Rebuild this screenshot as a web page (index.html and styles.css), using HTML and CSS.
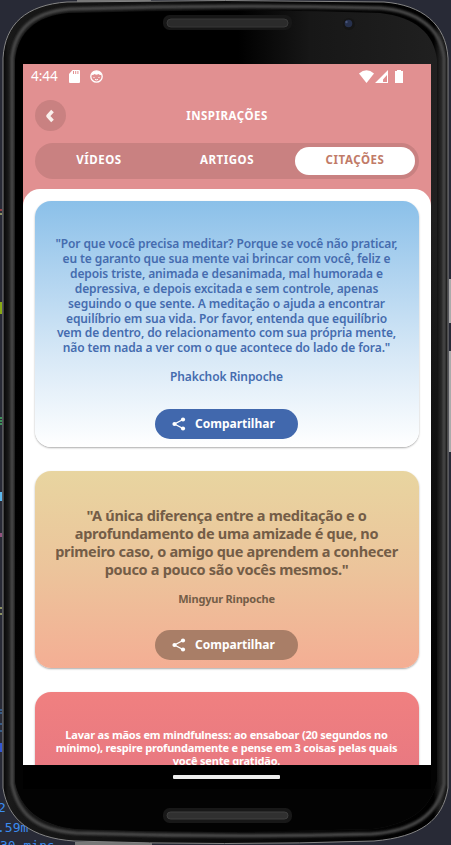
FILE: index.html
```html
<!DOCTYPE html>
<html lang="pt-BR">
<head>
<meta charset="utf-8">
<title>Inspirações</title>
<link rel="stylesheet" href="styles.css">
</head>
<body>
<svg class="device" viewBox="0 0 451 845" aria-hidden="true">
  <defs>
    <linearGradient id="glass" x1="0" x2="1"><stop offset="0" stop-color="#000"/><stop offset=".53" stop-color="#000"/><stop offset=".7" stop-color="#171717"/><stop offset="1" stop-color="#202020"/></linearGradient>
    <linearGradient id="fade" x1="0" x2="0" y1="0" y2="1"><stop offset=".2" stop-color="#000" stop-opacity="0"/><stop offset=".8" stop-color="#030303"/></linearGradient>
    <linearGradient id="rim" x1="0" x2="1"><stop offset="0" stop-color="#050505"/><stop offset=".012" stop-color="#191919"/><stop offset=".03" stop-color="#171717"/><stop offset=".968" stop-color="#000"/><stop offset=".982" stop-color="#222"/><stop offset="1" stop-color="#111"/></linearGradient>
    <filter id="soft" x="-5%" y="-5%" width="110%" height="110%"><feGaussianBlur stdDeviation="1"/></filter>
  </defs>
  <path d="M77 0H151V4H77zM75 842H152V845H75z" fill="#777"/>
  <path d="M449 279h2v44h-2zM449 351h2v101h-2z" fill="#aaa"/>
  <path d="M3 58C5 24 26 5 67 2Q225-1 384 2C422 5 446 24 448 58V788C443 820 421 837 374 841Q225 846 74 841C31 838 8 820 3 788Z" fill="url(#rim)" stroke="#858585" stroke-width="1"/>
  <path d="M12 58C15 28 34 12 70 9Q225 4 380 8C417 11 441 28 444 58V784C438 814 414 831 372 834Q225 838 76 833C36 830 18 814 12 784Z" fill="none" stroke="#484848" stroke-width="3.500" filter="url(#soft)"/>
  <path d="M15 60C18 32 36 16 68 13Q225 8 380 13C415 17 434 33 437 60V781C431 809 410 824 373 829Q225 834 77 829C39 825 20 808 15 781Z" fill="url(#glass)"/>
  <path d="M15 60V781C20 808 39 825 77 829Q225 834 373 829C410 824 431 809 437 781V60Z" fill="url(#fade)"/>
  <rect x="163" y="15" width="129" height="15" rx="6.5" fill="#171717"/><rect x="167" y="19" width="121" height="8" rx="4" fill="#2b2b2b" stroke="#393939"/>
  <circle cx="349" cy="24" r="6" fill="#151515"/><circle cx="348.500" cy="23.500" r="3.800" fill="#26304c"/><circle cx="346.500" cy="22" r="1.200" fill="#47547b"/>
  <rect x="163" y="808" width="129" height="15" rx="6.500" fill="#181818"/><rect x="167" y="812" width="121" height="7" rx="3.500" fill="#303030" stroke="#404040"/>
  <rect x="23" y="765" width="408" height="24" fill="#000"/>
  <path d="M0 210h2" stroke="#ff5555"/><path d="M0 418h2M0 421h2M0 424h2" stroke="#50fa7b"/><path d="M0 214h2M0 608h2M0 614h2" stroke="#f1fa8c"/>
  <path d="M0 302h2v12H0z" fill="#8aaa13"/><path d="M0 492h2v9H0z" fill="#5bb9ef"/><path d="M0 534h2M0 536h2" stroke="#ff79c6"/>
  <path d="M0 710h2M0 713h2M0 724h2M0 731h2" stroke="#458bd7"/><path d="M0 743h2v9H0z" fill="#3156d4"/>
</svg>
<div class="code code-a">2</div>
<div class="code code-b">.59m</div>
<div class="code code-c">30 mins</div>

<main class="screen">
  <header class="header">
    <div class="status">
      <span class="clock">4:44</span>
      <svg class="sd" viewBox="0 0 11 13"><path d="M3.500 0H10q1 0 1 1v11q0 1-1 1H1q-1 0-1-1V4z" fill="#fff"/><path d="M4.500 1v3M6.700 1v3M8.900 1v3" stroke="#e19091"/></svg>
      <svg class="face" viewBox="0 0 13 13"><circle cx="6.500" cy="6.500" r="5.700" fill="none" stroke="#fff" stroke-width="1.300"/><path d="M2 4Q2 1 6.500 1T11 4V5Q9 5 8.500 4 6.500 5.500 4.500 4 4 5 2 5z" fill="#fff"/><path d="M3.500 7.500h1M8.500 7.500h1M5 9.500q1.500.7 3 0" stroke="#fff" fill="none"/></svg>
      <svg class="signals" viewBox="0 0 44 13"><path d="M0 3.500Q7.500-3 15 3.500L7.500 13z" fill="#fff"/><path d="M29 0V13H16zM28 5l-4 4.500V12h4z" fill="#fff" fill-rule="evenodd"/><path d="M38 0h4v1h2v12h-8V1h2z" fill="#fff"/></svg>
    </div>
    <div class="titlebar">
      <span class="back"><svg viewBox="0 0 10 14"><path d="M7.500 2L3 7l4.500 5" fill="none" stroke="#faf1ed" stroke-width="3.600" stroke-linejoin="round"/></svg></span>
      <h1 class="title">INSPIRAÇÕES</h1>
    </div>
    <nav class="tabs">
      <span class="tab">VÍDEOS</span><span class="tab">ARTIGOS</span><span class="tab active">CITAÇÕES</span>
    </nav>
  </header>
  <section class="feed">
    <article class="card blue">
      <p class="quote">"Por que você precisa meditar? Porque se você não praticar,<br>eu te garanto que sua mente vai brincar com você, feliz e<br>depois triste, animada e desanimada, mal humorada e<br>depressiva, e depois excitada e sem controle, apenas<br>seguindo o que sente. A meditação o ajuda a encontrar<br>equilíbrio em sua vida. Por favor, entenda que equilíbrio<br>vem de dentro, do relacionamento com sua própria mente,<br>não tem nada a ver com o que acontece do lado de fora."</p>
      <p class="author">Phakchok Rinpoche</p>
      <div class="share"><svg viewBox="0 0 14 14"><path d="M11 2.500L2.500 7 11 11.500" fill="none" stroke="#fff" stroke-width="1.400"/><g fill="#fff"><circle cx="11" cy="2.500" r="2.100"/><circle cx="2.500" cy="7" r="2.100"/><circle cx="11" cy="11.500" r="2.100"/></g></svg><span>Compartilhar</span></div>
    </article>
    <article class="card sand">
      <p class="quote">"A única diferença entre a meditação e o<br>aprofundamento de uma amizade é que, no<br>primeiro caso, o amigo que aprendem a conhecer<br>pouco a pouco são vocês mesmos."</p>
      <p class="author">Mingyur Rinpoche</p>
      <div class="share"><svg viewBox="0 0 14 14"><path d="M11 2.500L2.500 7 11 11.500" fill="none" stroke="#fff" stroke-width="1.400"/><g fill="#fff"><circle cx="11" cy="2.500" r="2.100"/><circle cx="2.500" cy="7" r="2.100"/><circle cx="11" cy="11.500" r="2.100"/></g></svg><span>Compartilhar</span></div>
    </article>
    <article class="card coral">
      <p class="quote">Lavar as mãos em mindfulness: ao ensaboar (20 segundos no<br>mínimo), respire profundamente e pense em 3 coisas pelas quais<br>você sente gratidão.</p>
    </article>
  </section>
</main>
<div class="home"></div>
</body>
</html>
```
FILE: styles.css
```css
* { box-sizing: border-box; }
body {
  margin: 0;
  width: 451px;
  height: 845px;
  overflow: hidden;
  position: relative;
  background: #282a36;
  font-family: "Noto Sans", sans-serif;
}
.device { position: absolute; inset: 0; width: 451px; height: 845px; }
.code {
  position: absolute;
  left: 0;
  z-index: -1;
  font: 13px/16px "DejaVu Sans Mono", monospace;
  color: #3b8cf0;
  white-space: nowrap;
}
.code-a { top: 800px; left: -2px; }
.code-b { top: 820px; left: -3px; }
.code-c { top: 838px; }
.screen {
  position: relative;
  margin: 64px 20px 0 23px;
  height: 701px;
  background: #e19091;
  overflow: hidden;
}
.header { height: 124.500px; padding: 0 12px; }
.status { height: 24px; display: flex; align-items: center; margin-left: -4px; }
.clock { color: #fff; font: 13.5px "Noto Sans", sans-serif; width: 38px; }
.sd { width: 11px; height: 13px; }
.face { width: 13px; height: 13px; margin-left: 10px; }
.signals { width: 44px; height: 13px; margin-left: auto; margin-right: 16px; }
.titlebar { height: 55px; display: grid; grid-template-columns: 31px 1fr 31px; align-items: center; }
.back { width: 31px; height: 31px; border-radius: 50%; background: #c98181; display: grid; place-items: center; }
.back svg { width: 10px; height: 14px; margin-right: 2px; }
.title { margin: 0; color: #fff; font-size: 11.500px; line-height: 16px; font-weight: 700; letter-spacing: .5px; text-align: center; }
.tabs { display: grid; grid-template-columns: 128px 128px 120px; height: 36px; padding: 4px; border-radius: 18px; background: #c98181; align-items: center; }
.tab { color: #fff; font-size: 11.500px; line-height: 26px; height: 28px; font-weight: 700; letter-spacing: .55px; text-align: center; position: relative; left: -4px; }
.tab.active { left: 0; background: #fff; color: #c17b68; border-radius: 14px; }
.feed { background: #fff; border-radius: 17px 17px 0 0; padding: 12px 12.500px 0 11.500px; height: 590px; }
.card { border-radius: 16px; text-align: center; box-shadow: 0 1px 2px #0005; margin-bottom: 24px; display: flex; flex-direction: column; align-items: center; white-space: nowrap; }
.card p { margin: 0; }
.blue { height: 246.500px; padding-top: 36.500px; background: linear-gradient(#8bc0e9, #d5e7f6 61%, #fff); color: #456caf; }
.blue .quote { font-size: 12px; line-height: 14.900px; font-weight: 600; letter-spacing: -.1px; }
.blue .author { font-size: 12px; line-height: 18px; font-weight: 600; letter-spacing: -.1px; margin-top: 12px; }
.share { width: 143px; height: 30px; border-radius: 15px; background: #4168ad; display: flex; align-items: center; padding-left: 17px; gap: 9px; color: #fff; font-size: 12px; font-weight: 700; }
.share svg { width: 14px; height: 14px; }
.blue .share { margin-top: 22.500px; }
.sand { height: 197px; padding-top: 34.500px; background: linear-gradient(#e8d5a0, #ecc49b 50%, #f4ae94); color: #745d47; }
.sand .quote { font-size: 14.500px; line-height: 18px; font-weight: 700; letter-spacing: -.3px; }
.sand .author { font-size: 11px; line-height: 16px; font-weight: 700; letter-spacing: -.2px; margin-top: 13px; }
.sand .share { margin-top: 23px; background: #a97e67; }
.coral { height: 247px; padding-top: 36px; background: linear-gradient(#f08080, #d86883); color: #fff; }
.coral .quote { font-size: 11px; line-height: 13px; font-weight: 700; letter-spacing: -.2px; }
.home { position: absolute; left: 173px; top: 775px; width: 107px; height: 4px; border-radius: 1px; background: #eee; }
```
